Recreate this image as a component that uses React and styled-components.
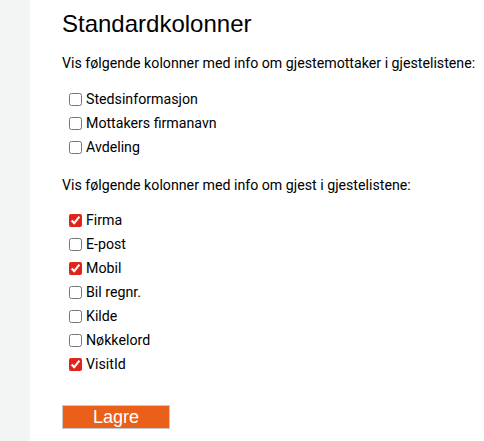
import React, { useState } from 'react';
import styled, { createGlobalStyle } from 'styled-components';

const GlobalStyle = createGlobalStyle`
  html, body {
    margin: 0;
    padding: 0;
    background: #ffffff;
  }
`;

const Page = styled.div`
  display: flex;
  min-height: 441px;
`;

const Sidebar = styled.div`
  width: 30px;
  flex-shrink: 0;
  background: #f3f4f4;
`;

const Content = styled.div`
  flex: 1;
  padding: 10px 0 0 32px;
  font-family: Roboto, "Liberation Sans", sans-serif;
  font-size: 14.2px;
  color: #000;
`;

const Title = styled.h2`
  margin: 0 0 15px;
  font-family: "Liberation Sans", Arial, sans-serif;
  font-weight: normal;
  font-size: 24px;
  line-height: 28px;
  color: #000;
`;

const Intro = styled.p`
  margin: 0 0 ${(p) => p.$gap}px;
  line-height: 20px;
`;

const List = styled.div`
  display: flex;
  flex-direction: column;
  margin: 0 0 16px 7px;
`;

const Row = styled.label`
  display: flex;
  align-items: center;
  height: 24px;
`;

const Box = styled.input`
  width: 13px;
  height: 13px;
  margin: 0 4px 0 0;
  accent-color: #e2231a;
`;

const SaveButton = styled.button`
  margin-top: 13px;
  width: 108px;
  height: 24px;
  padding: 0;
  border: 1px solid #c8c8c8;
  background: #ea601a;
  color: #fff;
  font-family: "Liberation Sans", Arial, sans-serif;
  font-size: 18px;
  line-height: 20px;
`;

const recipientColumns = [
  { key: 'location', label: 'Stedsinformasjon', on: false },
  { key: 'company', label: 'Mottakers firmanavn', on: false },
  { key: 'department', label: 'Avdeling', on: false },
];

const guestColumns = [
  { key: 'firm', label: 'Firma', on: true },
  { key: 'email', label: 'E-post', on: false },
  { key: 'mobile', label: 'Mobil', on: true },
  { key: 'car', label: 'Bil regnr.', on: false },
  { key: 'source', label: 'Kilde', on: false },
  { key: 'keyword', label: 'Nøkkelord', on: false },
  { key: 'visit', label: 'VisitId', on: true },
];

function ColumnList({ items }) {
  const [state, setState] = useState(() =>
    Object.fromEntries(items.map((i) => [i.key, i.on]))
  );
  return (
    <List>
      {items.map((item) => (
        <Row key={item.key}>
          <Box
            type="checkbox"
            checked={state[item.key]}
            onChange={() => setState((s) => ({ ...s, [item.key]: !s[item.key] }))}
          />
          {item.label}
        </Row>
      ))}
    </List>
  );
}

export default function App() {
  return (
    <>
      <GlobalStyle />
      <Page>
        <Sidebar />
        <Content>
          <Title>Standardkolonner</Title>
          <Intro $gap={14}>Vis følgende kolonner med info om gjestemottaker i gjestelistene:</Intro>
          <ColumnList items={recipientColumns} />
          <Intro $gap={13}>Vis følgende kolonner med info om gjest i gjestelistene:</Intro>
          <ColumnList items={guestColumns} />
          <SaveButton type="button">Lagre</SaveButton>
        </Content>
      </Page>
    </>
  );
}
